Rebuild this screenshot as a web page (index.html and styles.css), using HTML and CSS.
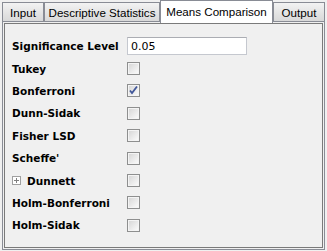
FILE: index.html
```html
<!DOCTYPE html>
<html lang="en">
<head>
    <meta charset="UTF-8">
    <title>Means Comparison</title>
    <link rel="stylesheet" href="styles.css">
</head>
<body>

    <!-- Tab strip -->
    <div class="tabs">
        <div class="tab tab-input">Input</div>
        <div class="tab tab-desc">Descriptive Statistics</div>
        <div class="tab tab-means active">Means Comparison</div>
        <div class="tab tab-output">Output</div>
    </div>

    <!-- Tab page -->
    <div class="panel">
        <div class="page">
            <div class="row">
                <span class="label">Significance Level</span>
                <input class="level" type="text" value="0.05">
            </div>
            <div class="row">
                <span class="label">Tukey</span>
                <span class="check"></span>
            </div>
            <div class="row">
                <span class="label">Bonferroni</span>
                <span class="check checked">
                    <svg width="11" height="11" viewBox="0 0 11 11">
                        <path d="M2 5.5 L4 8 L9 1.5" fill="none" stroke="#41579a" stroke-width="1.8"/>
                    </svg>
                </span>
            </div>
            <div class="row">
                <span class="label">Dunn-Sidak</span>
                <span class="check"></span>
            </div>
            <div class="row">
                <span class="label">Fisher LSD</span>
                <span class="check"></span>
            </div>
            <div class="row">
                <span class="label">Scheffe'</span>
                <span class="check"></span>
            </div>
            <div class="row">
                <span class="label"><span class="expand"></span>Dunnett</span>
                <span class="check"></span>
            </div>
            <div class="row">
                <span class="label">Holm-Bonferroni</span>
                <span class="check"></span>
            </div>
            <div class="row">
                <span class="label">Holm-Sidak</span>
                <span class="check"></span>
            </div>
        </div>
    </div>

</body>
</html>
```

FILE: styles.css
```css
body {
    margin: 0;
    background-color: #f0f0f0;
    font-family: "Liberation Sans", Arial, sans-serif;
}
.tabs {
    display: flex;
    align-items: flex-end;
    height: 21px;
    padding-left: 2px;
}
.tab {
    box-sizing: border-box;
    height: 19px;
    border: 1px solid #898c95;
    border-bottom: none;
    background: linear-gradient(#f3f3f3, #e5e5e5 50%, #d9d9d9);
    font-size: 11.6px;
    color: #000;
    text-align: center;
    line-height: 19px;
}
.tab-input { width: 42px; }
.tab-desc { width: 116px; }
.tab-means { width: 113px; }
.tab-output { width: 52px; }
.tab.active {
    position: relative;
    z-index: 1;
    height: 23px;
    margin-bottom: -2px;
    background: #ffffff;
    line-height: 22px;
}
.panel {
    box-sizing: border-box;
    width: 323px;
    height: 229px;
    margin-left: 2px;
    padding: 1px;
    border: 1px solid #898c95;
    background-color: #f0f0f0;
}
.page {
    box-sizing: border-box;
    height: 100%;
    padding: 11px 0 0 7px;
    border: 1px solid #7a7a7a;
    background-color: #f0f0f0;
}
.row {
    display: flex;
    align-items: center;
    height: 22.4px;
}
.label {
    display: flex;
    align-items: center;
    width: 115px;
    font-family: "DejaVu Sans", sans-serif;
    font-size: 10.5px;
    font-weight: bold;
    color: #000;
}
.level {
    box-sizing: border-box;
    width: 120px;
    height: 18px;
    padding: 0 3px;
    border: 1px solid #c5c8cf;
    border-top-color: #abadb3;
    background: #fff;
    font-family: "DejaVu Sans", sans-serif;
    font-size: 11px;
    color: #000;
    outline: none;
}
.check {
    box-sizing: border-box;
    display: flex;
    align-items: center;
    justify-content: center;
    width: 13px;
    height: 13px;
    border: 1px solid #8e8f8f;
    background: linear-gradient(135deg, #d4d4d4, #f5f5f5 80%, #fcfcfc);
    box-shadow: inset 0 0 0 1px #f4f4f4;
}
.expand {
    box-sizing: border-box;
    position: relative;
    width: 9px;
    height: 9px;
    margin-right: 6px;
    border: 1px solid #a0a0a0;
    background: #fff;
}
.expand::before {
    content: "";
    position: absolute;
    left: 1px;
    top: 3px;
    width: 5px;
    height: 1px;
    background: #808080;
}
.expand::after {
    content: "";
    position: absolute;
    left: 3px;
    top: 1px;
    width: 1px;
    height: 5px;
    background: #808080;
}
```
